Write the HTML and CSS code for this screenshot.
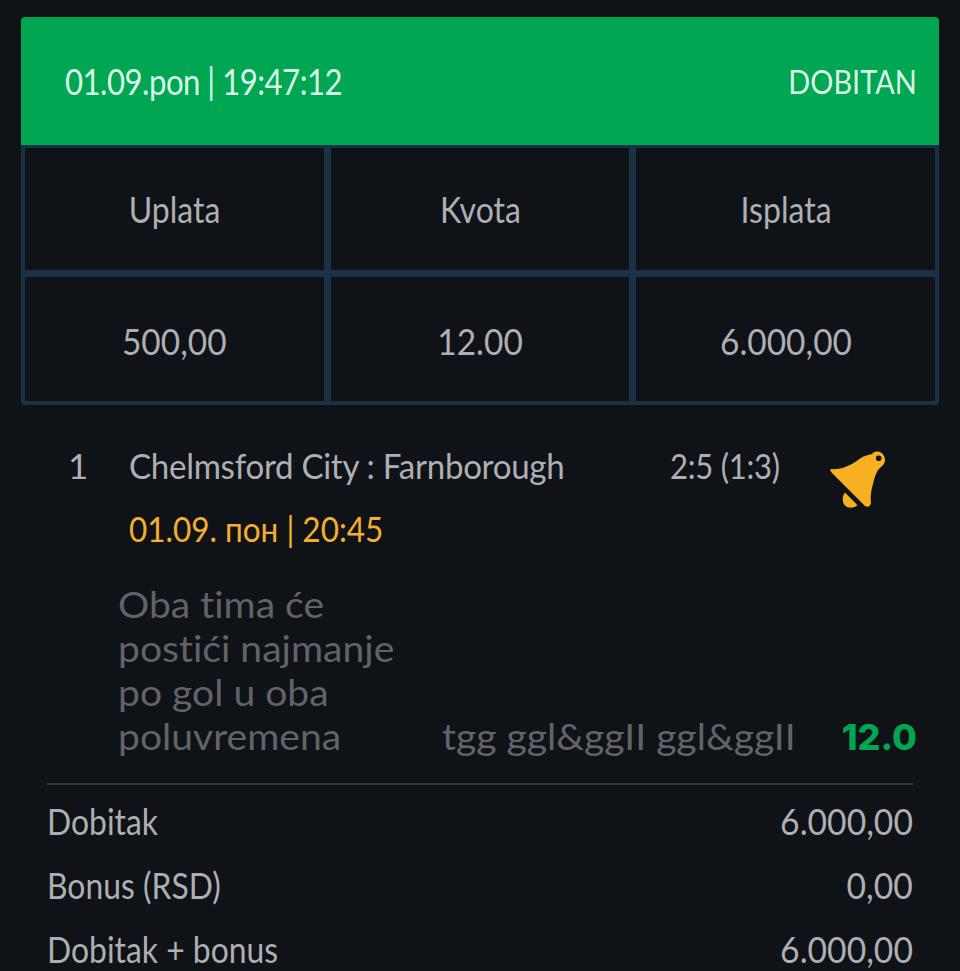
FILE: index.html
```html
<!DOCTYPE html>
<html lang="sr">
<head>
    <meta charset="UTF-8">
    <meta name="viewport" content="width=device-width, initial-scale=1.0">
    <title>Tiket</title>
    <link rel="stylesheet" href="styles.css">
</head>
<body>
    <div class="head">
        <span class="stamp">01.09.pon | 19:47:12</span>
        <span class="status">DOBITAN</span>
    </div>
    <div class="grid">
        <div class="cell"><span class="word">Uplata</span></div>
        <div class="cell"><span class="word">Kvota</span></div>
        <div class="cell"><span class="word">Isplata</span></div>
        <div class="cell cell-value"><span class="value">500,00</span></div>
        <div class="cell cell-value"><span class="value">12.00</span></div>
        <div class="cell cell-value"><span class="value">6.000,00</span></div>
    </div>
    <div class="match">
        <span class="num">1</span>
        <span class="teams"><span class="teams-text">Chelmsford City : Farnborough</span></span>
        <span class="score"><span class="score-text">2:5 (1:3)</span></span>
        <svg class="bell" viewBox="0 0 60 60" width="60" height="60">
            <path fill-rule="evenodd" fill="#f6b021" d="M3 19C12 20 22 16 30 10C35 6 40 5 44 4C47 0 54 1 56 6C58 10 57 14 53 17C49 20 48 24 46 30C44 38 42 44 43 52C43 56 40 58 37 56L4 23C2 21 2 19 3 19ZM50.700 5.500A2.800 2.800 0 1 0 50.701 11.100A2.800 2.800 0 1 0 50.700 5.500Z"/>
            <path fill="#f6b021" d="M17 42.500L29.500 55.300C26 58.500 20 58.500 17 55.500C14 52.500 14 46 17 42.500Z"/>
        </svg>
    </div>
    <div class="date"><span class="date-text">01.09. пон | 20:45</span></div>
    <div class="pick">
        <div class="pick-name"><span class="pick-text">Oba tima će<br>postići najmanje<br>po gol u oba<br>poluvremena</span></div>
        <div class="pick-code"><span class="pick-text">tgg ggl&amp;ggII ggl&amp;ggII</span></div>
        <div class="pick-odd">12.0</div>
    </div>
    <div class="totals">
        <div class="row"><span class="label">Dobitak</span><span class="sum">6.000,00</span></div>
        <div class="row"><span class="label">Bonus (RSD)</span><span class="sum">0,00</span></div>
        <div class="row"><span class="label">Dobitak + bonus</span><span class="sum">6.000,00</span></div>
    </div>
</body>
</html>
```
FILE: styles.css
```css
html,body{
    height: 971px;
    overflow: hidden;
}
body{
    margin: 0;
    padding-top: 17px;
    box-sizing: border-box;
    background-color: #0f1216;
    font-family: "Lato", "Liberation Sans", sans-serif;
    font-size: 36px;
    color: #aeafb2;
}
/* the original font is narrower than anything installed, so squeeze the text */
.stamp,.status,.word,.value,.teams-text,.score-text,.date-text,.label,.sum,.pick-text{
    display: inline-block;
    white-space: nowrap;
}
.stamp,.teams-text,.score-text,.date-text,.label,.pick-text{
    transform-origin: left center;
}
.status,.sum{
    transform-origin: right center;
}
.head{
    margin: 0 21px;
    height: 128px;
    padding: 0 22px 0 44px;
    display: flex;
    justify-content: space-between;
    align-items: center;
    background-color: #00a651;
    border-radius: 4px 4px 0 0;
    color: #d8f5e5;
}
.stamp{
    letter-spacing: -0.6px;
    transform: scaleX(.866);
}
.status{
    font-size: 33px;
    transform: scaleX(.875);
}
.grid{
    margin: 0 21px;
    padding: 3px 4px 4px;
    display: grid;
    grid-template-columns: repeat(3, 1fr);
    grid-template-rows: 122px 124px;
    gap: 7px;
    background-color: #1b3246;
    border-radius: 0 0 4px 4px;
}
.cell{
    display: flex;
    align-items: center;
    justify-content: center;
    background-color: #0f1216;
}
.cell-value{
    padding-top: 3px;
}
.word{
    transform: scaleX(.89);
}
.value{
    transform: scaleX(.93);
}
.match{
    margin-top: 30px;
    padding-left: 68px;
    height: 60px;
    display: flex;
    align-items: center;
    font-size: 35px;
}
.num{
    width: 61px;
}
.teams{
    width: 541px;
}
.teams-text{
    letter-spacing: -0.3px;
    transform: scaleX(.945);
}
.score{
    width: 158px;
}
.score-text{
    letter-spacing: -0.3px;
    transform: scaleX(.887);
}
.bell{
    margin-top: 30px;
    flex: none;
}
.date{
    margin-top: 12px;
    padding-left: 129px;
    font-size: 35px;
    color: #f2b02d;
}
.date-text{
    transform: scaleX(.9);
}
.pick{
    margin-top: 33px;
    padding: 0 43px 0 118px;
    display: flex;
    align-items: flex-end;
    font-size: 36px;
    line-height: 44px;
    color: #606367;
    font-variant-ligatures: none;
}
.pick-text{
    transform: scaleX(1.085);
}
.pick-name{
    width: 324px;
}
.pick-odd{
    margin-left: auto;
    font-family: "Inter", "Liberation Sans", sans-serif;
    font-size: 36px;
    font-weight: 800;
    line-height: 42px;
    color: #00a651;
}
.totals{
    margin: 25px 47px 0;
    padding-top: 4px;
    border-top: 2px solid #33363a;
}
.row{
    height: 64px;
    display: flex;
    justify-content: space-between;
    align-items: center;
}
.label{
    transform: scaleX(.885);
}
.sum{
    transform: scaleX(.936);
}
```
